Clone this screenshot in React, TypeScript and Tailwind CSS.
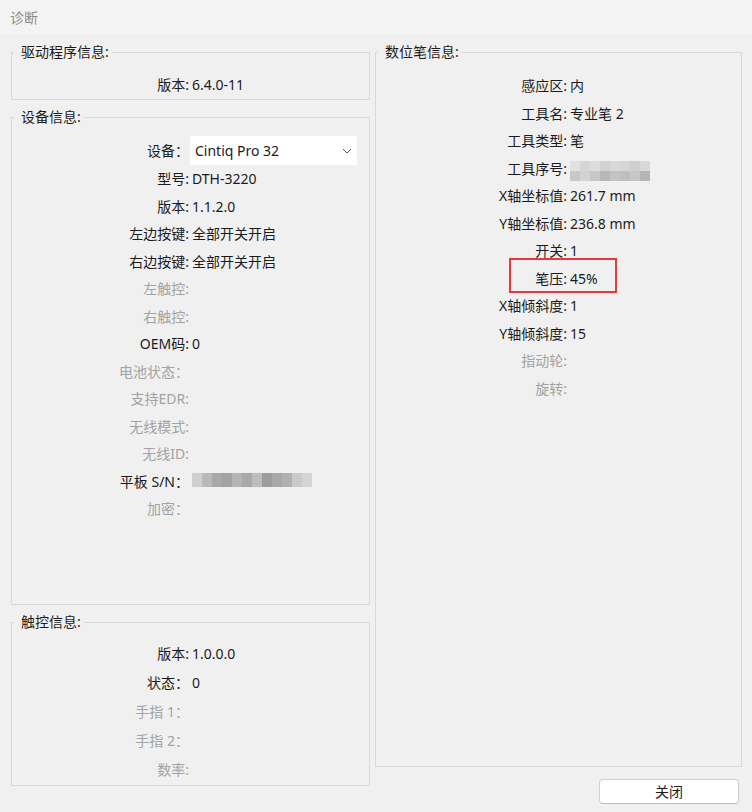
import React from "react";

type RowProps = {
  label: string;
  value?: React.ReactNode;
  disabled?: boolean;
  labelClass: string;
  height?: string;
};

function Row({ label, value, disabled, labelClass, height = "h-[27.5px]" }: RowProps) {
  return (
    <div className={`flex items-center ${height}`}>
      <span
        className={`shrink-0 text-right ${labelClass} ${
          disabled ? "text-[#a3a3a3]" : "text-[#1b1b1b]"
        }`}
      >
        {label}
      </span>
      {value !== undefined && <span className="ml-[3px] text-[#1b1b1b]">{value}</span>}
    </div>
  );
}

function Group({
  title,
  className,
  children,
}: {
  title: string;
  className: string;
  children: React.ReactNode;
}) {
  return (
    <fieldset className={`border border-[#d9d9d9] ${className}`}>
      <legend className="ml-[2px] pl-[7px] pr-[3px] leading-[20px] text-[#1b1b1b]">
        {title}
      </legend>
      {children}
    </fieldset>
  );
}

// pixelated block that hides a serial number
function Mosaic({ rows, cell }: { rows: string[][]; cell: string }) {
  return (
    <span className="inline-flex flex-col">
      {rows.map((r, i) => (
        <span key={i} className="flex">
          {r.map((c, j) => (
            <span key={j} className={cell} style={{ backgroundColor: c }} />
          ))}
        </span>
      ))}
    </span>
  );
}

const toolSerial = [
  ["#e2e2e2", "#d6d6d8", "#dcdcdc", "#d3d0d0", "#d8d8d8", "#d5d5d5", "#cfcfcf", "#d9d9d9"],
  ["#c9c9cb", "#d2d3d6", "#c7c7c9", "#b9b6b6", "#c3c3c3", "#bfbfbf", "#c6c6c6", "#b5b5b5"],
];

const tabletSerial = [
  ["#cfcfcf", "#b9b9b9", "#a9a9a9", "#a3a3a3", "#b4b4b4", "#aaaaaa", "#bdbdbd", "#9d9d9d", "#a8a8a8", "#b0b0b0", "#c9c9c9", "#d5d5d5"],
];

const L = "w-[177px]";
const R = "w-[191px]";

export default function App() {
  return (
    <div className="h-[812px] w-[752px] bg-[#f0f0f0] font-['Noto_Sans','Noto_Sans_CJK_SC',sans-serif] text-[14px]">
      <div className="flex h-[34px] items-center bg-[#f3f3f3] pl-[10px] text-[#8c8c8c]">诊断</div>

      <div className="flex gap-[5px] pl-[11px] pt-[8px]">
        <div className="flex w-[359px] flex-col gap-[7px]">
          <Group title="驱动程序信息:" className="h-[58px] pt-[9px]">
            <Row label="版本:" value="6.4.0-11" labelClass={L} />
          </Group>

          <Group title="设备信息:" className="h-[498px] pt-[9px]">
            <div className="flex h-[29px] items-center">
              <span className={`shrink-0 text-right text-[#1b1b1b] ${L}`}>设备：</span>
              <div className="ml-[1px] flex h-[29px] w-[167px] items-center justify-between bg-white pl-[5px] pr-[5px] text-[#1b1b1b]">
                <span>Cintiq Pro 32</span>
                <svg width="10" height="6" viewBox="0 0 10 6" fill="none">
                  <path d="M1 1l4 4 4-4" stroke="#555" strokeWidth="1" />
                </svg>
              </div>
            </div>
            <Row label="型号:" value="DTH-3220" labelClass={L} />
            <Row label="版本:" value="1.1.2.0" labelClass={L} />
            <Row label="左边按键:" value="全部开关开启" labelClass={L} />
            <Row label="右边按键:" value="全部开关开启" labelClass={L} />
            <Row label="左触控:" disabled labelClass={L} />
            <Row label="右触控:" disabled labelClass={L} />
            <Row label="OEM码:" value="0" labelClass={L} />
            <Row label="电池状态：" disabled labelClass={L} />
            <Row label="支持EDR:" disabled labelClass={L} />
            <Row label="无线模式:" disabled labelClass={L} />
            <Row label="无线ID:" disabled labelClass={L} />
            <Row
              label="平板 S/N："
              value={<Mosaic rows={tabletSerial} cell="block h-[14px] w-[10px]" />}
              labelClass={L}
            />
            <Row label="加密：" disabled labelClass={L} />
          </Group>

          <Group title="触控信息:" className="h-[174px] pt-[7px]">
            <Row label="版本:" value="1.0.0.0" labelClass={L} height="h-[29px]" />
            <Row label="状态：" value="0" labelClass={L} height="h-[29px]" />
            <Row label="手指 1：" disabled labelClass={L} height="h-[29px]" />
            <Row label="手指 2：" disabled labelClass={L} height="h-[29px]" />
            <Row label="数率:" disabled labelClass={L} height="h-[29px]" />
          </Group>
        </div>

        <div className="flex w-[367px] flex-col">
          <Group title="数位笔信息:" className="h-[725px] pt-[10px]">
            <Row label="感应区:" value="内" labelClass={R} />
            <Row label="工具名:" value="专业笔 2" labelClass={R} />
            <Row label="工具类型:" value="笔" labelClass={R} />
            <Row
              label="工具序号:"
              value={<Mosaic rows={toolSerial} cell="block h-[10px] w-[10px]" />}
              labelClass={R}
            />
            <Row label="X轴坐标值:" value="261.7 mm" labelClass={R} />
            <Row label="Y轴坐标值:" value="236.8 mm" labelClass={R} />
            <Row label="开关:" value="1" labelClass={R} />
            <div className="relative">
              <Row label="笔压:" value="45%" labelClass={R} />
              <div className="pointer-events-none absolute left-[133px] top-[-7px] h-[35px] w-[108px] border-2 border-[#e8383d]" />
            </div>
            <Row label="X轴倾斜度:" value="1" labelClass={R} />
            <Row label="Y轴倾斜度:" value="15" labelClass={R} />
            <Row label="指动轮:" disabled labelClass={R} />
            <Row label="旋转:" disabled labelClass={R} />
          </Group>
          <button className="mr-[3px] mt-[12px] h-[25px] w-[140px] self-end rounded-[4px] border border-[#d0d0d0] border-b-[#bcbcbc] bg-white text-[#1b1b1b]">
            关闭
          </button>
        </div>
      </div>
    </div>
  );
}
